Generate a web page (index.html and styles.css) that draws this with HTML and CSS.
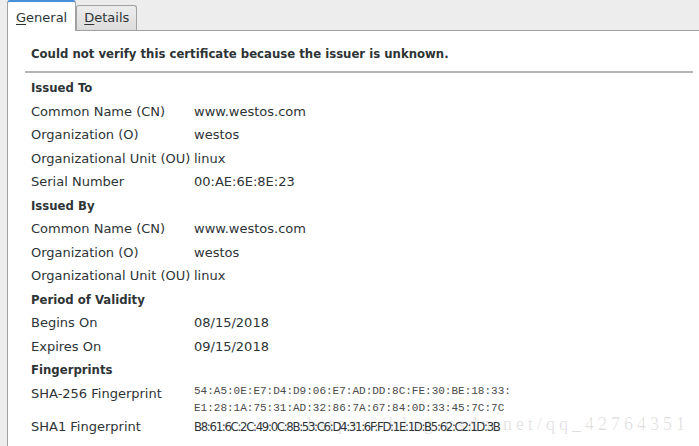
FILE: index.html
```html
<!DOCTYPE html>
<html>
<head>
    <title>Certificate Viewer</title>
    <link rel="stylesheet" href="styles.css">
</head>
<body>
    <div class="notebook">
        <div class="tabs">
            <div class="tab active"><u>G</u>eneral</div>
            <div class="tab"><u>D</u>etails</div>
        </div>
        <div class="page">
            <div class="warning">Could not verify this certificate because the issuer is unknown.</div>
            <div class="details">
                <div class="section">Issued To</div>
                <div class="row"><span class="label">Common Name (CN)</span><span class="value">www.westos.com</span></div>
                <div class="row"><span class="label">Organization (O)</span><span class="value">westos</span></div>
                <div class="row"><span class="label">Organizational Unit (OU)</span><span class="value">linux</span></div>
                <div class="row"><span class="label">Serial Number</span><span class="value">00:AE:6E:8E:23</span></div>

                <div class="section">Issued By</div>
                <div class="row"><span class="label">Common Name (CN)</span><span class="value">www.westos.com</span></div>
                <div class="row"><span class="label">Organization (O)</span><span class="value">westos</span></div>
                <div class="row"><span class="label">Organizational Unit (OU)</span><span class="value">linux</span></div>

                <div class="section">Period of Validity</div>
                <div class="row"><span class="label">Begins On</span><span class="value">08/15/2018</span></div>
                <div class="row"><span class="label">Expires On</span><span class="value">09/15/2018</span></div>

                <div class="section">Fingerprints</div>
                <div class="row fp"><span class="label">SHA-256 Fingerprint</span><span class="value mono">54:A5:0E:E7:D4:D9:06:E7:AD:DD:8C:FE:30:BE:18:33:<br>E1:28:1A:75:31:AD:32:86:7A:67:84:0D:33:45:7C:7C</span></div>
                <div class="row"><span class="label">SHA1 Fingerprint</span><span class="value narrow">B8:61:6C:2C:49:0C:8B:53:C6:D4:31:6F:FD:1E:1D:B5:62:C2:1D:3B</span></div>
            </div>
        </div>
    </div>
    <div class="watermark">https://blog.csdn.net/qq_42764351</div>
</body>
</html>
```

FILE: styles.css
```css
html, body {
    margin: 0;
    padding: 0;
    height: 100%;
    overflow: hidden;
}

body {
    background-color: #ededed;
    font-family: "DejaVu Sans", "Noto Sans", sans-serif;
    font-size: 13px;
    color: #2e3436;
    position: relative;
}

.notebook {
    margin-left: 7px;
    height: 100%;
    display: flex;
    flex-direction: column;
}

.tabs {
    display: flex;
    align-items: flex-end;
    height: 30px;
}

.tab {
    height: 24px;
    padding: 0 7px;
    line-height: 24px;
    border: 1px solid #a1a1a1;
    border-bottom: none;
    border-radius: 3px 3px 0 0;
    background: linear-gradient(#ededed, #dcdcdc);
    color: #2e3436;
}

.tab u {
    text-decoration-thickness: 1px;
    text-underline-offset: 2px;
}

.tab.active {
    height: 29px;
    line-height: 32px;
    padding: 0 8px;
    background: #fff;
    border-top: 2px solid #4a90d9;
    position: relative;
    z-index: 1;
    margin-bottom: -1px;
}

.page {
    flex: 1;
    background-color: #fff;
    border-left: 1px solid #a1a1a1;
    border-top: 1px solid #a1a1a1;
    padding: 0 6px 0 17px;
}

.warning,
.section {
    font-family: "DejaVu Sans Condensed", "DejaVu Sans", sans-serif;
    font-stretch: condensed;
    font-weight: bold;
}

.warning {
    padding: 15px 0 10px 6px;
    border-bottom: 2px solid #b5b5b5;
}

.details {
    padding: 3px 0 0 6px;
}

.section {
    height: 23.5px;
    line-height: 23.5px;
}

.row {
    display: flex;
    height: 23.5px;
    line-height: 23.5px;
}

.label {
    width: 163px;
    flex-shrink: 0;
}

.row.fp {
    height: 33.75px;
    line-height: 19px;
}

.row.fp .label {
    padding-top: 2px;
}

.mono {
    font-family: "Liberation Mono", monospace;
    font-size: 11px;
    line-height: 17px;
    margin-top: 1px;
    color: #4a4a4a;
}

.narrow {
    font-family: "DejaVu Sans Condensed", "DejaVu Sans", sans-serif;
    font-stretch: condensed;
    letter-spacing: -1.3px;
}

.watermark {
    position: absolute;
    right: 10px;
    top: 412px;
    font-family: "Liberation Serif", serif;
    font-size: 18px;
    line-height: 24px;
    letter-spacing: 4px;
    color: rgba(0, 0, 0, 0.12);
    white-space: nowrap;
}
```
